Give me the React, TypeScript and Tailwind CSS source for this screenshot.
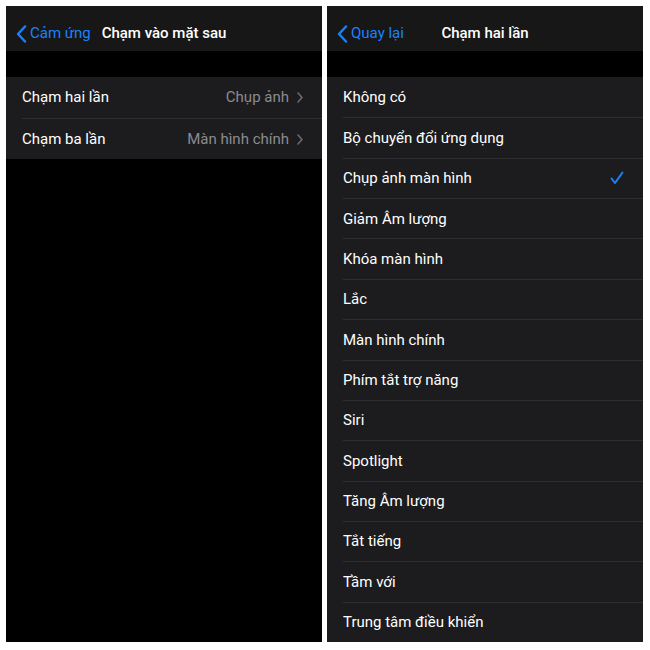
import React from 'react';

const BackChevron = () => (
    <svg width="11" height="18" viewBox="0 0 11 18" fill="none">
        <path d="M9 1.5L2 9l7 7.5" stroke="#1a82fb" strokeWidth="2.4" strokeLinecap="round" strokeLinejoin="round" />
    </svg>
);

const NavBar: React.FC<{ back: string; title: string }> = ({ back, title }) => (
    <div className="relative h-[45px] bg-[#171717] flex items-center pt-[10px] shrink-0">
        <div className="absolute left-[10px] top-[10px] bottom-0 flex items-center gap-[3px]">
            <BackChevron />
            <span className="text-[15px] text-[#1a82fb]">{back}</span>
        </div>
        <div className="w-full text-center text-[15px] font-medium text-white">{title}</div>
    </div>
);

const settings = [
    { label: 'Chạm hai lần', value: 'Chụp ảnh' },
    { label: 'Chạm ba lần', value: 'Màn hình chính' },
];

const actions = [
    'Không có',
    'Bộ chuyển đổi ứng dụng',
    'Chụp ảnh màn hình',
    'Giảm Âm lượng',
    'Khóa màn hình',
    'Lắc',
    'Màn hình chính',
    'Phím tắt trợ năng',
    'Siri',
    'Spotlight',
    'Tăng Âm lượng',
    'Tắt tiếng',
    'Tầm với',
    'Trung tâm điều khiển',
];

export default function App() {
    return (
        <div className="w-[650px] h-[650px] bg-white flex gap-[5px] pt-[6px] pl-[6px]" style={{ fontFamily: 'Roboto, "Noto Sans", sans-serif' }}>
            {/* left screen */}
            <div className="w-[316px] h-[636px] bg-black flex flex-col">
                <NavBar back="Cảm ứng" title="Chạm vào mặt sau" />
                <div className="h-[26px] shrink-0" />
                <div className="bg-[#1c1c1e]">
                    {settings.map((s, i) => (
                        <div key={s.label} className="pl-4">
                            <div className={`h-[41px] flex items-center pr-[19px] ${i > 0 ? 'border-t border-[#2e2e30]' : ''}`}>
                                <span className="flex-1 text-[15px] text-white">{s.label}</span>
                                <span className="text-[15px] text-[#8b8b90] mr-[8px]">{s.value}</span>
                                <svg width="6" height="11" viewBox="0 0 6 11" fill="none">
                                    <path d="M1 1l4 4.5L1 10" stroke="#6d6d72" strokeWidth="1.5" strokeLinecap="round" strokeLinejoin="round" />
                                </svg>
                            </div>
                        </div>
                    ))}
                </div>
            </div>

            {/* right screen */}
            <div className="w-[316px] h-[636px] bg-black flex flex-col">
                <NavBar back="Quay lại" title="Chạm hai lần" />
                <div className="h-[26px] shrink-0" />
                <div className="bg-[#1c1c1e] flex-1">
                    {actions.map((a, i) => (
                        <div key={a} className="pl-4">
                            <div className={`h-[40.36px] flex items-center pr-[19px] ${i > 0 ? 'border-t border-[#2e2e30]' : ''}`}>
                                <span className="flex-1 text-[15px] text-white">{a}</span>
                                {i === 2 && (
                                    <svg width="14" height="14" viewBox="0 0 14 14" fill="none">
                                        <path d="M1.5 7.5l3.5 4.5L12.5 1.5" stroke="#1a82fb" strokeWidth="2" strokeLinecap="round" strokeLinejoin="round" />
                                    </svg>
                                )}
                            </div>
                        </div>
                    ))}
                </div>
            </div>
        </div>
    );
}
